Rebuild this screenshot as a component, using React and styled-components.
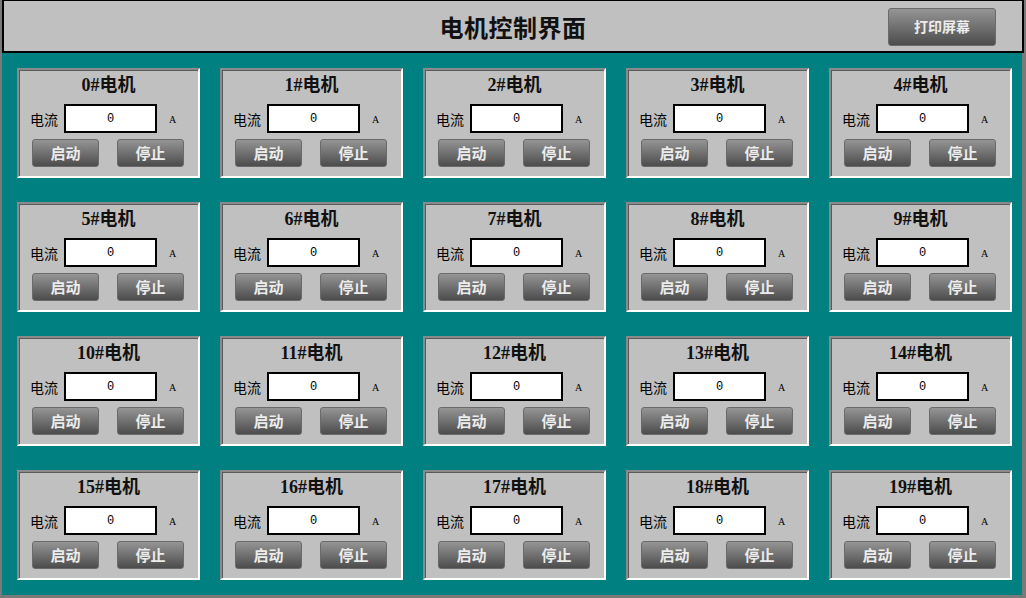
import React from "react";
import styled, { createGlobalStyle } from "styled-components";

const Global = createGlobalStyle`
  html, body { margin: 0; padding: 0; background: #7a7a7a; }
  body { font-family: "Noto Sans CJK SC", "Liberation Sans", sans-serif; }
`;

const Frame = styled.div`
  width: 1022px;
  margin-left: 2px;
  display: flex;
  flex-direction: column;
`;

const Header = styled.header`
  box-sizing: border-box;
  height: 53px;
  background: #c0c0c0;
  border-top: 1px solid #000;
  border-left: 2px solid #000;
  border-right: 2px solid #000;
  border-bottom: 2px solid #000;
  display: grid;
  grid-template-columns: 1fr auto 1fr;
  align-items: center;
`;

const Title = styled.h1`
  grid-column: 2;
  margin: 0;
  font-family: "Liberation Serif", "Noto Sans CJK SC", serif;
  font-size: 24px;
  font-weight: 700;
  color: #111;
  letter-spacing: 0.5px;
`;

const HeaderRight = styled.div`
  grid-column: 3;
  display: flex;
  justify-content: flex-end;
  padding-right: 26px;
  padding-top: 1px;
`;

const GreyButton = styled.button`
  box-sizing: border-box;
  width: ${(p) => p.$w}px;
  height: ${(p) => p.$h}px;
  border: 1px solid #6a6a6a;
  border-radius: 3px;
  background: linear-gradient(#959595, #4c4c4c);
  color: #ececec;
  font-family: "Noto Sans CJK SC", sans-serif;
  font-weight: 700;
  font-size: ${(p) => p.$fs}px;
  line-height: 1;
  padding: 0 0 2px 0;
  display: flex;
  align-items: center;
  justify-content: center;
  cursor: pointer;
`;

const Main = styled.main`
  box-sizing: border-box;
  width: 1020px;
  height: 542px;
  background: #008080;
  padding: 15px 10px 15px 15px;
  display: grid;
  grid-template-columns: repeat(5, 183px);
  grid-template-rows: repeat(4, 110px);
  column-gap: 20px;
  row-gap: 24px;
`;

const Panel = styled.section`
  box-sizing: border-box;
  background: #c0c0c0;
  border-style: solid;
  border-width: 2px;
  border-color: #8a8a8a #ffffff #ffffff #8a8a8a;
  box-shadow: inset 1px 1px 0 #5a5a5a;
  display: flex;
  flex-direction: column;
`;

const PanelTitle = styled.div`
  padding-top: 5px;
  height: 20px;
  line-height: 20px;
  text-align: center;
  font-family: "Liberation Serif", "Noto Sans CJK SC", serif;
  font-weight: 700;
  font-size: 18px;
  color: #111;
`;

const CurrentRow = styled.div`
  margin-top: 9px;
  padding-left: 11px;
  display: flex;
  align-items: center;
  height: 29px;
`;

const Label = styled.span`
  font-size: 14px;
  color: #000;
  width: 34px;
`;

const ValueBox = styled.div`
  box-sizing: border-box;
  width: 93px;
  height: 29px;
  border: 2px solid #000;
  background: #fff;
  display: flex;
  align-items: center;
  justify-content: center;
  padding-top: 1px;
  font-family: "Liberation Mono", monospace;
  font-size: 12px;
  color: #000;
`;

const Unit = styled.span`
  margin-left: 12px;
  font-family: "Liberation Serif", serif;
  font-size: 10px;
  color: #000;
  padding-top: 2px;
`;

const ButtonRow = styled.div`
  margin-top: 6px;
  padding-left: 13px;
  display: flex;
  gap: 18px;
`;

function MotorPanel({ index }) {
  return (
    <Panel>
      <PanelTitle>{index}#电机</PanelTitle>
      <CurrentRow>
        <Label>电流</Label>
        <ValueBox>0</ValueBox>
        <Unit>A</Unit>
      </CurrentRow>
      <ButtonRow>
        <GreyButton $w={67} $h={28} $fs={15}>启动</GreyButton>
        <GreyButton $w={67} $h={28} $fs={15}>停止</GreyButton>
      </ButtonRow>
    </Panel>
  );
}

export default function App() {
  const motors = Array.from({ length: 20 }, (_, i) => i);
  return (
    <>
      <Global />
      <Frame>
        <Header>
          <Title>电机控制界面</Title>
          <HeaderRight>
            <GreyButton $w={108} $h={38} $fs={14}>打印屏幕</GreyButton>
          </HeaderRight>
        </Header>
        <Main>
          {motors.map((i) => (
            <MotorPanel key={i} index={i} />
          ))}
        </Main>
      </Frame>
    </>
  );
}
